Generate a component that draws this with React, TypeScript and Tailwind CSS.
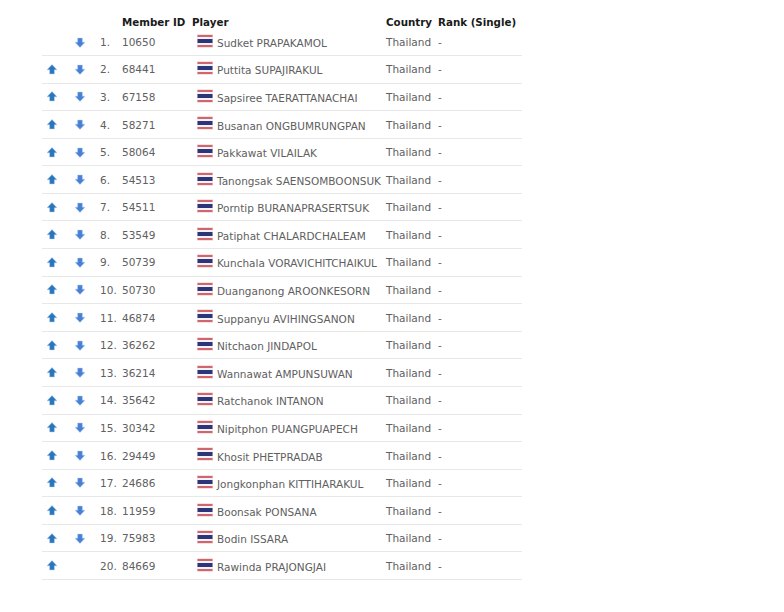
const players = [
  ["10650", "Sudket PRAPAKAMOL"],
  ["68441", "Puttita SUPAJIRAKUL"],
  ["67158", "Sapsiree TAERATTANACHAI"],
  ["58271", "Busanan ONGBUMRUNGPAN"],
  ["58064", "Pakkawat VILAILAK"],
  ["54513", "Tanongsak SAENSOMBOONSUK"],
  ["54511", "Porntip BURANAPRASERTSUK"],
  ["53549", "Patiphat CHALARDCHALEAM"],
  ["50739", "Kunchala VORAVICHITCHAIKUL"],
  ["50730", "Duanganong AROONKESORN"],
  ["46874", "Suppanyu AVIHINGSANON"],
  ["36262", "Nitchaon JINDAPOL"],
  ["36214", "Wannawat AMPUNSUWAN"],
  ["35642", "Ratchanok INTANON"],
  ["30342", "Nipitphon PUANGPUAPECH"],
  ["29449", "Khosit PHETPRADAB"],
  ["24686", "Jongkonphan KITTIHARAKUL"],
  ["11959", "Boonsak PONSANA"],
  ["75983", "Bodin ISSARA"],
  ["84669", "Rawinda PRAJONGJAI"],
];

const Arrow = ({ up }: { up: boolean }) => (
  <svg width="10" height="11" viewBox="0 0 10 11" className={up ? "" : "rotate-180"}>
    <path d="M5 0.5 L10 5.8 L7.4 5.8 L7.4 10 L2.6 10 L2.6 5.8 L0 5.8 Z" fill={up ? "#2a76bd" : "#4a7fd6"} stroke="#b5d0ee" strokeWidth="0.5" />
  </svg>
);

const Flag = () => (
  <svg width="16" height="14" viewBox="0 0 16 14" className="-mt-[2px] shrink-0">
    <rect x="0" y="0" width="16" height="14" fill="#f5e2e2" />
    <rect x="0.5" y="1" width="15" height="2" fill="#d0656c" />
    <rect x="0.5" y="3" width="15" height="2" fill="#f2f2f8" />
    <rect x="0.5" y="5" width="15" height="4" fill="#2c3578" />
    <rect x="0.5" y="9" width="15" height="2" fill="#f2f2f8" />
    <rect x="0.5" y="11" width="15" height="2" fill="#d0656c" />
  </svg>
);

const App = () => {
  return (
    <div className="w-[784px] h-[612px] bg-white pl-[42px] pt-[16px] font-['DejaVu_Sans',sans-serif] text-[10.5px] text-[#606060]">
      <div className="w-[480px]">
        <div className="flex h-[13px] items-center font-bold text-[#1a1a1a] text-[10.3px]">
          <div className="w-[80px]" />
          <div className="w-[70px]">Member ID</div>
          <div className="w-[194px]">Player</div>
          <div className="w-[52px]">Country</div>
          <div>Rank (Single)</div>
        </div>
        <div>
          {players.map(([id, name], i) => (
            <div key={id} className="flex h-[27.58px] items-center border-b border-[#e8e8e8] first:h-[27px]">
              <div className="w-[28px] flex justify-start pl-[5px]">
                {i > 0 && <Arrow up />}
              </div>
              <div className="w-[30px] flex justify-start pl-[5px]">
                {i < players.length - 1 && <Arrow up={false} />}
              </div>
              <div className="w-[22px] pt-[2px]">{i + 1}.</div>
              <div className="w-[75px] pt-[2px]">{id}</div>
              <div className="w-[189px] flex items-center whitespace-nowrap">
                <Flag />
                <span className="ml-[4px] mt-[4px]">{name}</span>
              </div>
              <div className="w-[52px] pt-[2px]">Thailand</div>
              <div className="pt-[2px]">-</div>
            </div>
          ))}
        </div>
      </div>
    </div>
  );
};

export default App;
